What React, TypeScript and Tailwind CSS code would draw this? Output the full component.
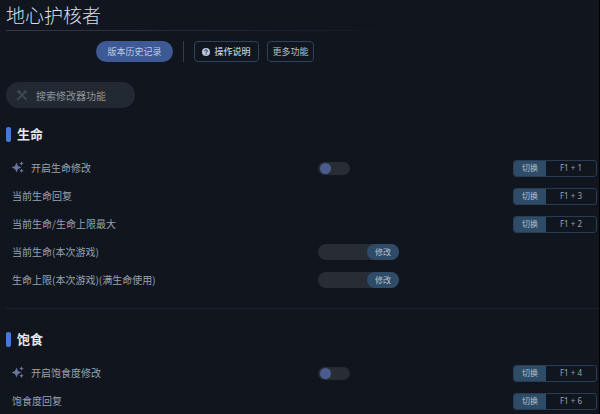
import { useState } from 'react'

type Option = {
  name: string
  kind?: 'toggle' | 'value'
  hotkey?: string
}

type Group = {
  title: string
  options: Option[]
}

const groups: Group[] = [
  {
    title: '生命',
    options: [
      { name: '开启生命修改', kind: 'toggle', hotkey: 'F1 + 1' },
      { name: '当前生命回复', hotkey: 'F1 + 3' },
      { name: '当前生命/生命上限最大', hotkey: 'F1 + 2' },
      { name: '当前生命(本次游戏)', kind: 'value' },
      { name: '生命上限(本次游戏)(满生命使用)', kind: 'value' },
    ],
  },
  {
    title: '饱食',
    options: [
      { name: '开启饱食度修改', kind: 'toggle', hotkey: 'F1 + 4' },
      { name: '饱食度回复', hotkey: 'F1 + 6' },
    ],
  },
]

function ToolsIcon() {
  return (
    <svg viewBox="0 0 12 12" className="h-3 w-3 shrink-0" fill="none" stroke="#414954" aria-hidden="true">
      <path d="M1 3 3 1l2.200 1.800-2 2z" fill="#414954" strokeWidth="0.5" />
      <path d="m4 4 6.500 6.800" strokeWidth="1.800" />
      <path d="M1.300 10.800 8 4.200" strokeWidth="1.800" />
      <path d="M10 1 8 3l1 1.200 2.200-1.700" strokeWidth="1.300" />
    </svg>
  )
}

function SparkleIcon() {
  return (
    <svg viewBox="0 0 12 12" className="h-3 w-3 shrink-0" fill="#6975a0" aria-hidden="true">
      <path d="M4.500 1.500 6 5l3.500 1.500L6 8l-1.500 3.500L3 8-.500 6.500 3 5z" />
      <path d="M9.500 0.300 10.200 1.800 11.700 2.500 10.200 3.200 9.500 4.700 8.800 3.200 7.300 2.500 8.800 1.800z" />
      <path d="M9.500 7.600 10.200 9.100 11.700 9.800 10.200 10.500 9.500 12 8.800 10.500 7.300 9.800 8.800 9.100z" />
    </svg>
  )
}

function HelpIcon() {
  return (
    <svg viewBox="0 0 8 8" className="h-2 w-2 shrink-0" aria-hidden="true">
      <circle cx="4" cy="4" r="4" fill="#b9c6e0" />
      <path d="M2.700 3.200c0-1.800 2.600-1.700 2.600-.1 0 .9-1.200.9-1.200 1.700" fill="none" stroke="#1a2434" strokeWidth="1" />
      <circle cx="4.100" cy="6.100" r="0.600" fill="#1a2434" />
    </svg>
  )
}

function Toggle({ label }: { label: string }) {
  return (
    <div className="relative h-[13px] w-8">
      <input
        type="checkbox"
        aria-label={label}
        className="peer block h-full w-full cursor-pointer appearance-none rounded-full bg-[#272c35] checked:bg-[#2f4d6b]"
      />
      <span className="pointer-events-none absolute top-px left-0.5 h-[11px] w-[11px] rounded-full bg-[#4b5c8c] peer-checked:right-0.5 peer-checked:left-auto" />
    </div>
  )
}

function ValueField({ label }: { label: string }) {
  return (
    <div className="flex h-4 w-[81px] rounded-full bg-[#272c35]">
      <input
        type="text"
        aria-label={label}
        className="min-w-0 flex-1 bg-transparent px-2 text-[8px] text-[#98a2b0] outline-none"
      />
      <button type="button" className="w-8 rounded-full bg-[#2e4b68] text-[8px] text-[#b4c0cc]">
        修改
      </button>
    </div>
  )
}

function Hotkey({ keys }: { keys: string }) {
  return (
    <div className="flex h-[17px] w-full overflow-hidden rounded-[3px] border border-[#263d53] text-[8px]">
      <button type="button" className="w-8 bg-[#2e4b68] text-[#b4c0cc]">
        切换
      </button>
      <span className="flex flex-1 items-center justify-center font-['Noto_Sans'] text-[#98a2b0]">
        {keys}
      </span>
    </div>
  )
}

function OptionRow({ option }: { option: Option }) {
  return (
    <li className="grid h-7 grid-cols-[306fr_195fr_84px] items-center pr-0.5 pl-1.5">
      <div className="flex items-center gap-[7px] pb-0.5 text-[10px] whitespace-nowrap text-[#98a2b0]">
        {option.kind === 'toggle' && <SparkleIcon />}
        {option.name}
      </div>
      <div>
        {option.kind === 'toggle' && <Toggle label={option.name} />}
        {option.kind === 'value' && <ValueField label={option.name} />}
      </div>
      {option.hotkey && <Hotkey keys={option.hotkey} />}
    </li>
  )
}

export default function App() {
  const [search, setSearch] = useState('')

  return (
    <main className="min-h-screen border-r border-black bg-[#11161e] font-['Noto_Sans_CJK_SC',sans-serif]">
      <header className="pl-1.5">
        <h1 className="flex h-[30px] items-center text-[19px] font-light text-[#d5dde8]">
          地心护核者
        </h1>
        <div className="h-px w-2/3 bg-linear-to-r from-[#343b48] to-transparent" />
        <nav className="mt-2.5 flex h-[21px] items-stretch pl-[90px] text-[9px]">
          <button type="button" className="w-[77px] rounded-full bg-[#3e5a95] text-[#bccae4]">
            版本历史记录
          </button>
          <span className="mx-2.5 w-px bg-[#343c4b]" />
          <button
            type="button"
            className="flex w-[65px] items-center justify-center gap-1 rounded border border-[#2b435c] text-[#dce2e9]"
          >
            <HelpIcon />
            操作说明
          </button>
          <button
            type="button"
            className="ml-2 w-[47px] rounded border border-[#2b435c] text-[#b4c0cc]"
          >
            更多功能
          </button>
        </nav>
        <label className="mt-5 flex h-[26px] w-[129px] items-center gap-2 rounded-full bg-[#222932] pl-2.5">
          <ToolsIcon />
          <input
            type="text"
            value={search}
            onChange={(e) => setSearch(e.target.value)}
            placeholder="搜索修改器功能"
            aria-label="搜索修改器功能"
            className="min-w-0 flex-1 bg-transparent text-[10px] text-[#98a2b0] outline-none placeholder:text-[#8e949b]"
          />
        </label>
      </header>

      <div className="ml-1.5 divide-y divide-[#1d232c]">
        {groups.map((group) => (
          <section key={group.title} className="pt-5 pb-3.5 first:pt-4 last:pb-0">
            <h2 className="flex h-5 items-center gap-1.5 text-[13px] font-bold text-[#e3e8ee]">
              <span className="h-[15px] w-[5px] rounded-xs bg-[#437ad8]" />
              {group.title}
            </h2>
            <ul className="mt-2.5">
              {group.options.map((option) => (
                <OptionRow key={option.name} option={option} />
              ))}
            </ul>
          </section>
        ))}
      </div>
    </main>
  )
}
